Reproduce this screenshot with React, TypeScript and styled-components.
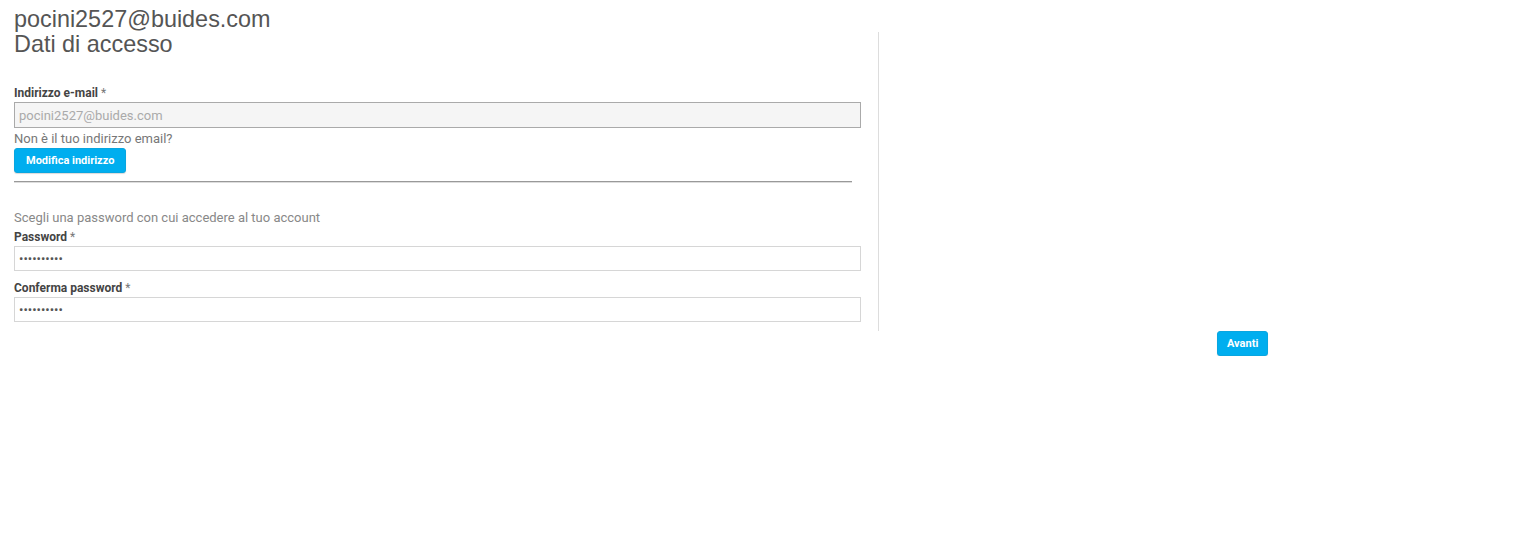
import React from "react";
import styled, { createGlobalStyle } from "styled-components";

const Global = createGlobalStyle`
  html, body { margin: 0; padding: 0; background: #fff; }
  body { font-family: Roboto, "Liberation Sans", Arial, sans-serif; }
`;

const Page = styled.div`
  padding: 7px 14px 0 14px;
  width: 1538px;
  box-sizing: border-box;
`;

const Title = styled.h1`
  margin: 0;
  font-family: "Liberation Sans", Arial, sans-serif;
  font-weight: 400;
  font-size: 23.4px;
  line-height: 25px;
  color: #555;
`;

const Row = styled.div`
  display: flex;
`;

const LeftCol = styled.div`
  width: 865px;
  box-sizing: border-box;
  padding: 0 17px 9px 0;
  border-right: 1px solid #ddd;
`;

const RightCol = styled.div`
  flex: 1;
`;

const Section = styled.div`
  margin-top: 26px;
`;

const Label = styled.label`
  display: block;
  font-size: 12px;
  font-weight: 700;
  line-height: 17px;
  color: #444;
  padding-top: 2px;
`;

const Star = styled.span`
  font-weight: 400;
  color: #777;
`;

const Input = styled.input<{ $readOnly?: boolean }>`
  display: block;
  width: 100%;
  box-sizing: border-box;
  height: ${(p) => (p.$readOnly ? "26px" : "25px")};
  padding: 0 4px;
  font-family: Roboto, "Liberation Sans", Arial, sans-serif;
  font-size: 13px;
  color: ${(p) => (p.$readOnly ? "#aaa" : "#555")};
  background: ${(p) => (p.$readOnly ? "#f5f5f5" : "#fff")};
  border: 1px solid ${(p) => (p.$readOnly ? "#aaa" : "#d6d6d6")};
  border-radius: 0;
  outline: none;
  &[type="password"] {
    font-size: 13px;
    letter-spacing: 0;
  }
`;

const Hint = styled.p`
  margin: 2px 0 0;
  font-size: 13px;
  line-height: 18px;
  color: #777;
`;

const Button = styled.button<{ $pad?: number }>`
  display: inline-block;
  height: 25px;
  padding: 0 ${(p) => p.$pad ?? 11}px;
  font-family: Roboto, "Liberation Sans", Arial, sans-serif;
  font-size: 11px;
  font-weight: 700;
  color: #fff;
  background: #00aeef;
  border: 1px solid #09a6e0;
  border-radius: 3px;
  box-shadow: 0 1px 1px rgba(0, 0, 0, 0.15);
  cursor: pointer;
`;

const Divider = styled.hr`
  margin: 8px 9px 0 0;
  border: 0;
  border-top: 1px solid #999;
  border-bottom: 1px solid #ddd;
  height: 0;
`;

const Lead = styled.p`
  margin: 26px 0 0;
  font-size: 13px;
  line-height: 18px;
  color: #888;
`;

const Group = styled.div`
  margin-bottom: 7px;
  &:last-child { margin-bottom: 0; }
`;

const Footer = styled.div`
  display: flex;
  padding-left: 1203px;
`;

export default function App() {
  return (
    <>
      <Global />
      <Page>
        <Title>pocini2527@buides.com</Title>
        <Row>
          <LeftCol>
            <Title as="h2">Dati di accesso</Title>
            <Section>
              <Label>
                Indirizzo e-mail <Star>*</Star>
              </Label>
              <Input $readOnly readOnly value="pocini2527@buides.com" />
              <Hint>Non è il tuo indirizzo email?</Hint>
              <Button>Modifica indirizzo</Button>
              <Divider />
            </Section>
            <Lead>Scegli una password con cui accedere al tuo account</Lead>
            <Group>
              <Label>
                Password <Star>*</Star>
              </Label>
              <Input type="password" readOnly value="••••••••••" />
            </Group>
            <Group>
              <Label>
                Conferma password <Star>*</Star>
              </Label>
              <Input type="password" readOnly value="••••••••••" />
            </Group>
          </LeftCol>
          <RightCol />
        </Row>
        <Footer>
          <Button $pad={9}>Avanti</Button>
        </Footer>
      </Page>
    </>
  );
}
